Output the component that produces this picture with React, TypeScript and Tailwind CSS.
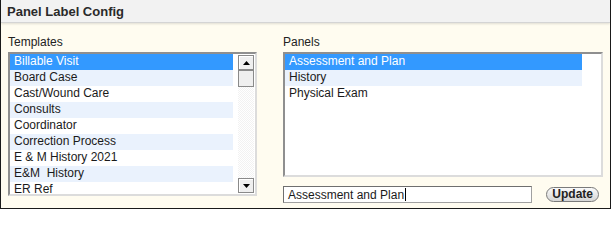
import React from "react";

const TEMPLATES = [
  "Billable Visit",
  "Board Case",
  "Cast/Wound Care",
  "Consults",
  "Coordinator",
  "Correction Process",
  "E & M History 2021",
  "E&M  History",
  "ER Ref",
];

const PANELS = ["Assessment and Plan", "History", "Physical Exam"];

function rowClass(i: number) {
  if (i === 0) return "bg-[#3399ff] text-white";
  if (i % 2 === 1) return "bg-[#eaf2fd] text-[#1a1a1a]";
  return "bg-white text-[#1a1a1a]";
}

function ScrollButton({ down }: { down?: boolean }) {
  return (
    <div className="flex h-[15px] w-[16px] items-center justify-center border border-[#8a8a8a] bg-[#efefef] shadow-[inset_1px_1px_0_#fff]">
      <svg width="7" height="4" viewBox="0 0 7 4">
        <path d={down ? "M0 0h7L3.5 4z" : "M0 4h7L3.5 0z"} fill="#000" />
      </svg>
    </div>
  );
}

export default function App() {
  return (
    <div
      className="h-[209px] w-[611px] border-x border-b border-[#1a1a1a] bg-[#fffcf0] text-[12px]"
      style={{ fontFamily: '"Liberation Sans", Arial, sans-serif' }}
    >
      <div className="h-[23px] border-b border-[#d4d4d4] bg-[#f2f2f2] pl-[6px] pt-[3px] text-[13px] leading-[17px] font-bold text-[#2a2a2a] shadow-[0_1px_2px_rgba(0,0,0,0.12)]">
        Panel Label Config
      </div>
      <div className="flex gap-[26px] px-[7px] pt-[13px]">
        <div className="w-[249px]">
          <div className="mb-[3px] h-[13px] leading-[13px] text-[#222]">Templates</div>
          <div className="flex h-[144px] border-2 border-[#8f8f8f] border-r-[#dcdcdc] border-b-[#dcdcdc] bg-white">
            <div className="flex-1 overflow-hidden pr-[5px]">
              {TEMPLATES.map((t, i) => (
                <div key={t} className={`h-[16px] whitespace-pre pl-[4px] leading-[14px] ${rowClass(i)}`}>
                  {t}
                </div>
              ))}
            </div>
            <div className="my-[1px] mr-[1px] flex w-[16px] flex-col bg-[repeating-conic-gradient(#f2f2f2_0%_25%,#ffffff_0%_50%)] bg-[length:2px_2px]">
              <ScrollButton />
              <div className="h-[17px] border border-[#8a8a8a] bg-[#efefef]" />
              <div className="flex-1" />
              <ScrollButton down />
            </div>
          </div>
        </div>
        <div className="flex-1">
          <div className="mb-[3px] h-[13px] leading-[13px] text-[#222]">Panels</div>
          <div className="h-[125px] border-2 border-[#8f8f8f] border-r-[#dcdcdc] border-b-[#dcdcdc] bg-white pr-[19px]">
            {PANELS.map((p, i) => (
              <div key={p} className={`h-[16px] pl-[4px] leading-[14px] ${rowClass(i)}`}>
                {p}
              </div>
            ))}
          </div>
          <div className="mt-[9px] flex items-center justify-between pr-[4px]">
            <div className="flex h-[17px] w-[249px] items-center border border-[#a0a0a0] border-l-[#6f6f6f] border-t-[#6f6f6f] bg-white pl-[4px] text-[#1a1a1a]">
              Assessment and Plan<span className="ml-px inline-block h-[13px] w-px bg-black" />
            </div>
            <button className="h-[15px] rounded-full border border-[#7a7a7a] bg-gradient-to-b from-[#fafafa] to-[#d6d6d6] px-[5px] text-[12px] leading-[13px] font-bold text-[#222]">
              Update
            </button>
          </div>
        </div>
      </div>
    </div>
  );
}
